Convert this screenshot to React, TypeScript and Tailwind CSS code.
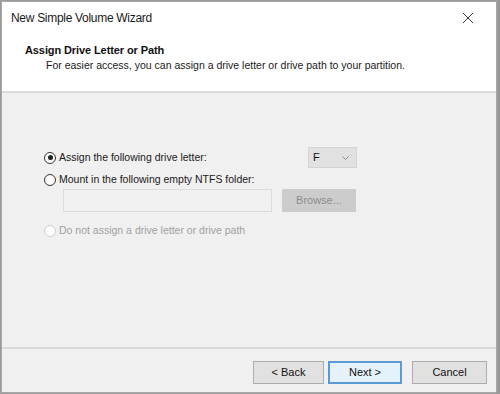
const Radio = ({ checked, disabled }: { checked?: boolean; disabled?: boolean }) => (
  <span
    className={`flex h-[12px] w-[12px] items-center justify-center rounded-full border bg-white ${
      disabled ? "border-[#cfcfcf] bg-[#ececec]" : "border-[#333333]"
    }`}
  >
    {checked && <span className="h-[5px] w-[5px] rounded-full bg-[#222222]" />}
  </span>
)

const App = () => {
  return (
    <div className="h-[394px] w-[500px] overflow-hidden bg-[#9a9a9a] pl-[1px] pt-[1px] font-['Liberation_Sans',Arial,sans-serif]">
      <div className="flex h-[392px] w-[496px] flex-col border border-[#a8a8a8] bg-white">
        {/* title bar */}
        <div className="flex h-[32px] shrink-0 items-center justify-between pl-[9px] pr-[22px]">
          <span className="text-[12px] tracking-[-0.3px] text-[#1a1a1a]">New Simple Volume Wizard</span>
          <svg width="12" height="12" viewBox="0 0 12 12" className="text-[#333]">
            <path d="M1 1 L11 11 M11 1 L1 11" stroke="currentColor" strokeWidth="1" fill="none" />
          </svg>
        </div>

        {/* header */}
        <div className="h-[59px] shrink-0 border-b-2 border-[#dcdcdc] bg-white pl-[23px] pt-[9px]">
          <div className="text-[11px] leading-[15px] font-bold tracking-[-0.1px] text-[#111]">Assign Drive Letter or Path</div>
          <div className="pl-[21px] text-[10.5px] leading-[15px] text-[#1a1a1a]">
            For easier access, you can assign a drive letter or drive path to your partition.
          </div>
        </div>

        {/* body */}
        <div className="flex flex-1 flex-col bg-[#f0f0f0] pl-[42px] pt-[54px] text-[10.5px] text-[#1a1a1a]">
          <div className="flex h-[21px] items-center">
            <Radio checked />
            <span className="ml-[3px] w-[249px]">Assign the following drive letter:</span>
            <div className="flex h-[21px] w-[49px] items-center justify-between border border-[#d4d4d4] bg-[#e1e1e1] pl-[4px] pr-[7px]">
              <span className="text-[11px] text-[#111]">F</span>
              <svg width="7" height="4" viewBox="0 0 7 4">
                <path d="M0.5 0.5 L3.5 3.5 L6.5 0.5" stroke="#8a8a8a" strokeWidth="1" fill="none" />
              </svg>
            </div>
          </div>
          <div className="mt-[5px] flex h-[14px] items-center">
            <Radio />
            <span className="ml-[3px]">Mount in the following empty NTFS folder:</span>
          </div>
          <div className="mt-[2px] flex pl-[19px]">
            <div className="h-[23px] w-[209px] border border-[#dcdcdc] bg-[#f0f0f0]" />
            <div className="ml-[10px] flex h-[23px] w-[74px] items-center justify-center border border-[#cccccc] bg-[#cccccc] text-[11px] text-[#8d8d8d]">
              Browse...
            </div>
          </div>
          <div className="mt-[12px] flex h-[14px] items-center text-[#a0a0a0]">
            <Radio disabled />
            <span className="ml-[3px]">Do not assign a drive letter or drive path</span>
          </div>
        </div>

        {/* footer */}
        <div className="flex h-[45px] shrink-0 items-start justify-end border-t-2 border-[#dadada] bg-[#f0f0f0] pr-[9px] pt-[12px] text-[11px] text-[#111]">
          <div className="flex h-[23px] w-[71px] items-center justify-center border border-[#adadad] bg-[#e1e1e1]">
            &lt; Back
          </div>
          <div className="ml-[4px] flex h-[23px] w-[74px] items-center justify-center border-2 border-[#5b9bd5] bg-[#e5f1fb]">
            Next &gt;
          </div>
          <div className="ml-[10px] flex h-[23px] w-[75px] items-center justify-center border border-[#adadad] bg-[#e1e1e1]">
            Cancel
          </div>
        </div>
      </div>
    </div>
  )
}

export default App
